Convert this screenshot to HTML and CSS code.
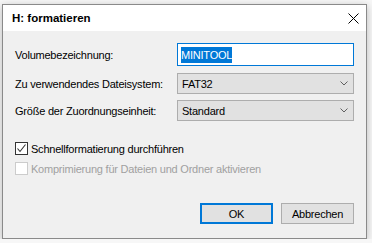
FILE: index.html
```html
<!DOCTYPE html>
<html lang="de">
<head>
    <meta charset="UTF-8">
    <title>H: formatieren</title>
    <link rel="stylesheet" href="styles.css">
</head>
<body>
    <div class="dialog">
        <div class="titlebar">
            <span class="title">H: formatieren</span>
            <svg class="close" width="11" height="11" viewBox="0 0 11 11">
                <path d="M0.5 0.5 L10.5 10.5 M10.5 0.5 L0.5 10.5" stroke="#000" stroke-width="1" fill="none"/>
            </svg>
        </div>
        <div class="content">
            <div class="form">
                <label class="label">Volumebezeichnung:</label>
                <div class="textbox"><span class="selected">MINITOOL</span></div>

                <label class="label">Zu verwendendes Dateisystem:</label>
                <div class="combo">
                    <span>FAT32</span>
                    <svg class="chevron" width="8" height="5" viewBox="0 0 8 5">
                        <path d="M0.5 0.5 L4 4 L7.5 0.5" stroke="#606060" stroke-width="1" fill="none"/>
                    </svg>
                </div>

                <label class="label">Größe der Zuordnungseinheit:</label>
                <div class="combo">
                    <span>Standard</span>
                    <svg class="chevron" width="8" height="5" viewBox="0 0 8 5">
                        <path d="M0.5 0.5 L4 4 L7.5 0.5" stroke="#606060" stroke-width="1" fill="none"/>
                    </svg>
                </div>
            </div>

            <div class="checks">
                <div class="check">
                    <span class="box">
                        <svg width="11" height="11" viewBox="0 0 11 11">
                            <path d="M1.5 5.5 L4 8.5 L9.5 1.5" stroke="#333" stroke-width="1.1" fill="none"/>
                        </svg>
                    </span>
                    <span>Schnellformatierung durchführen</span>
                </div>
                <div class="check disabled">
                    <span class="box"></span>
                    <span>Komprimierung für Dateien und Ordner aktivieren</span>
                </div>
            </div>

            <div class="buttons">
                <button class="btn default">OK</button>
                <button class="btn">Abbrechen</button>
            </div>
        </div>
    </div>
</body>
</html>
```

FILE: styles.css
```css
body {
    margin: 0;
    background-color: #f7f7f7;
    font-family: "Segoe UI", "Liberation Sans", Arial, sans-serif;
    font-size: 11px;
    letter-spacing: -0.22px;
    color: #000;
}
.dialog {
    margin: 4px 0 0 2px;
    width: 363px;
    height: 233px;
    border: 1px solid #8a8a8a;
    background-color: #f0f0f0;
    box-shadow: 0 2px 8px rgba(0, 0, 0, 0.25);
    display: flex;
    flex-direction: column;
}
.titlebar {
    height: 26px;
    background-color: #fff;
    display: flex;
    align-items: center;
    justify-content: space-between;
    padding: 0 7px 0 9px;
}
.title {
    font-weight: bold;
    font-size: 11.5px;
    letter-spacing: 0;
    color: #000;
}
.content {
    flex: 1;
    padding: 12px 12px 0 12px;
    display: flex;
    flex-direction: column;
}
.form {
    display: grid;
    grid-template-columns: 162px 177px;
    row-gap: 6px;
    align-items: center;
}
.label {
    white-space: nowrap;
}
.textbox {
    height: 21px;
    border: 1px solid #0078d7;
    background-color: #fff;
    display: flex;
    align-items: center;
    padding-left: 3px;
    margin-bottom: 1px;
}
.selected {
    background-color: #0078d7;
    color: #fff;
    line-height: 16px;
}
.combo {
    height: 19px;
    border: 1px solid #adadad;
    background-color: #e1e1e1;
    display: flex;
    align-items: center;
    justify-content: space-between;
    padding: 0 5px 0 4px;
}
.checks {
    margin-top: 21px;
    display: flex;
    flex-direction: column;
    gap: 7px;
}
.check {
    display: flex;
    align-items: center;
    gap: 3px;
    height: 13px;
}
.box {
    width: 11px;
    height: 11px;
    border: 1px solid #333;
    background-color: #fff;
    display: flex;
}
.check.disabled {
    color: #a0a0a0;
}
.check.disabled .box {
    border-color: #cccccc;
}
.buttons {
    margin-top: 28px;
    display: flex;
    justify-content: flex-end;
    gap: 8px;
}
.btn {
    width: 73px;
    height: 21px;
    font-family: inherit;
    font-size: 11px;
    letter-spacing: -0.22px;
    background-color: #e1e1e1;
    border: 1px solid #adadad;
    padding: 0;
    color: #000;
}
.btn.default {
    border: 2px solid #0078d7;
}
```
